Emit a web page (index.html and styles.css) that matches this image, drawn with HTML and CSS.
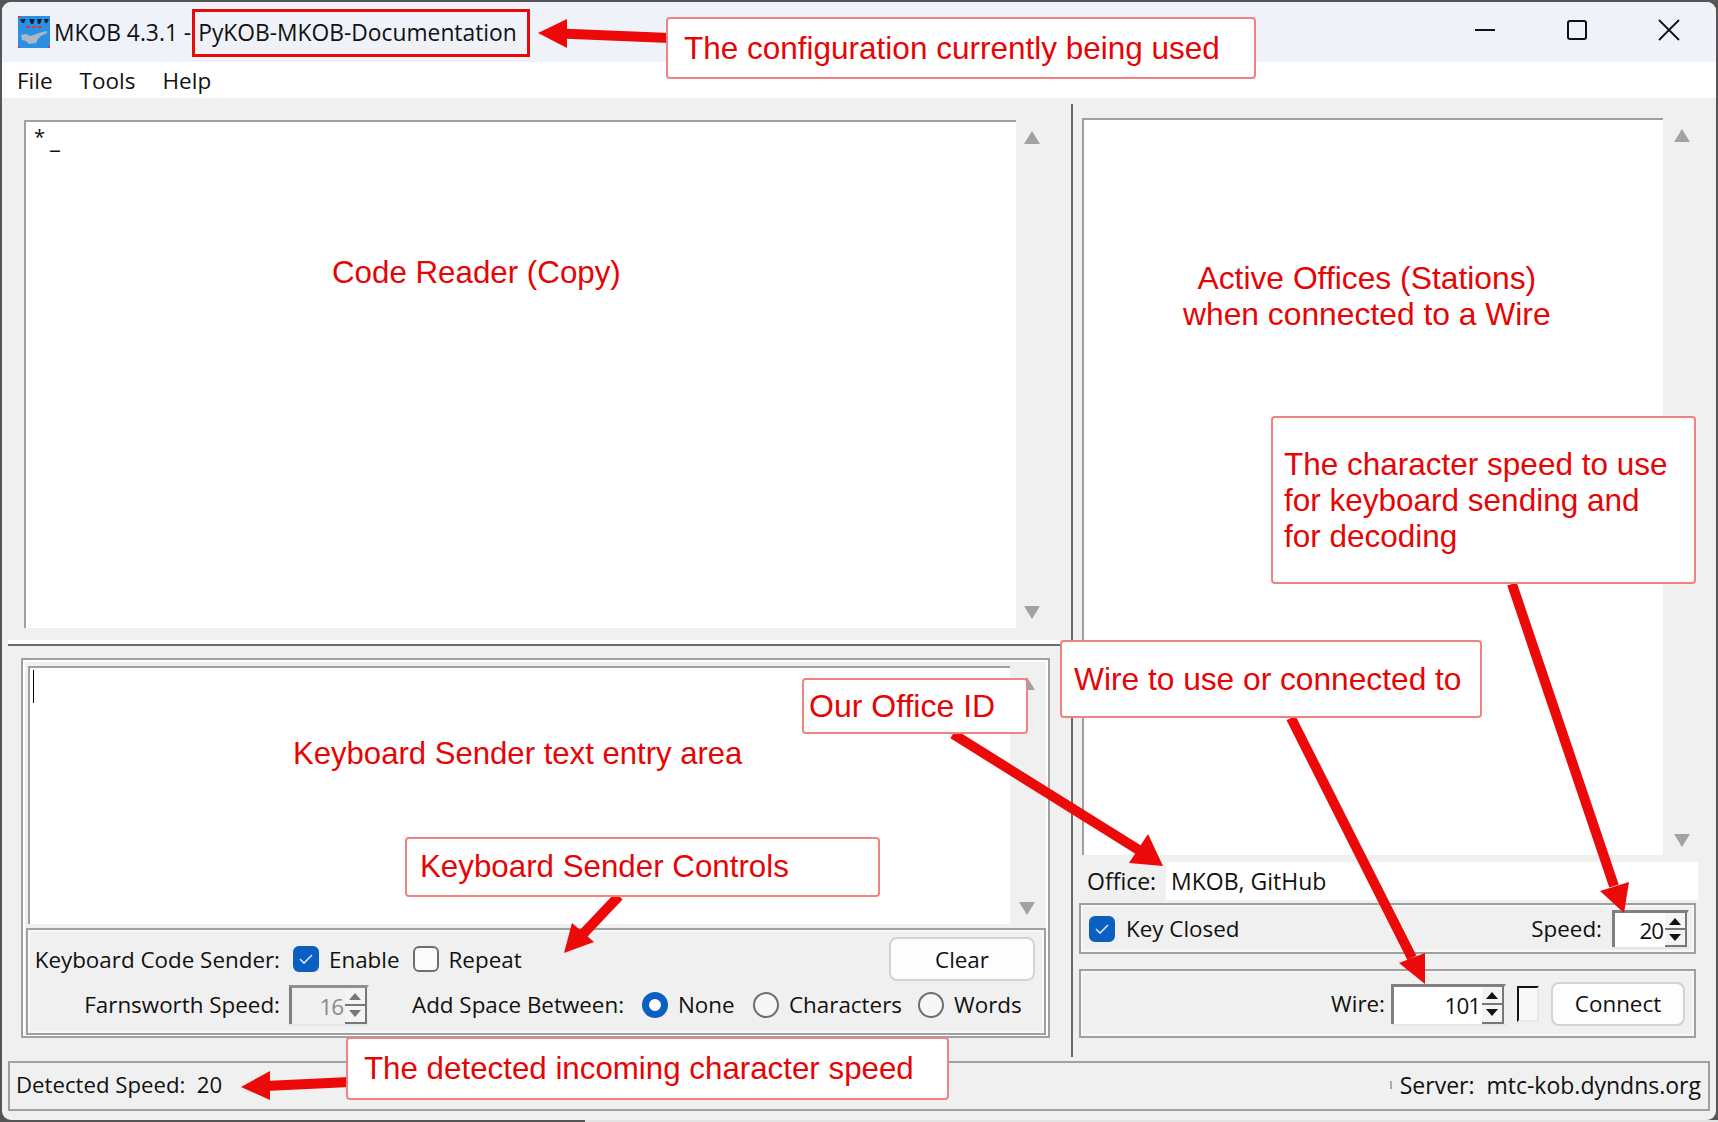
FILE: index.html
```html
<!DOCTYPE html>
<html><head>
<title>MKOB 4.3.1 - PyKOB-MKOB-Documentation</title>
<link rel="stylesheet" href="styles.css">
</head><body>
<div class="window">
  <div class="titlebar">
    <svg class="app-icon" width="32" height="32" viewBox="0 0 32 32">
      <rect width="32" height="32" fill="#2a90e4"/>
      <path d="M2 3h6l-2 4h-2zM11 3h6l-2 5h-2zM19 3h5l-2 5h-2zM26 3h5l-2 4h-2z" fill="#10233c"/>
      <path d="M8 10h4v2h-4zM14 10h4v2h-4zM20 10h4v2h-4z" fill="#e2353a"/>
      <path d="M3 19l5-1 4 2 6-2 6-2 5-1v2l-6 3-3 3-2 4-7 1-3-3-4-1z" fill="#a9b8c4"/>
      <path d="M0 0h2v2h-2zM0 30h2v2h-2zM30 30h2v2h-2z" fill="#e2353a"/>
    </svg>
    <span class="app-name">MKOB 4.3.1 -</span>
    <span class="config-name">PyKOB-MKOB-Documentation</span>
    <div class="caption-btns">
      <svg width="22" height="22" viewBox="0 0 22 22"><path d="M1 11h20" stroke="#111" stroke-width="2"/></svg>
      <svg width="22" height="22" viewBox="0 0 22 22"><rect x="2" y="2" width="18" height="18" rx="2" fill="none" stroke="#111" stroke-width="2"/></svg>
      <svg width="22" height="22" viewBox="0 0 22 22"><path d="M1 1l20 20M21 1l-20 20" stroke="#111" stroke-width="1.8"/></svg>
    </div>
  </div>
  <div class="menubar"><span>File</span><span>Tools</span><span>Help</span></div>

  <div class="main">
    <div class="left-pane">
      <div class="reader">
        <div class="textbox reader-text"><span class="star">*</span><span class="prompt">_</span></div>
        <div class="scroll"><i class="up"></i><i class="down"></i></div>
      </div>
      <div class="hsep"></div>
      <div class="sender-frame">
        <div class="sender-top">
          <div class="textbox sender-text"><span class="caret"></span></div>
          <div class="scroll"><i class="up"></i><i class="down"></i></div>
        </div>
        <div class="frame controls">
          <div class="ctl-row first">
            <label class="ctl-label">Keyboard Code Sender:</label>
            <span class="check on"><svg width="16" height="12" viewBox="0 0 16 12"><path d="M2 6l4 4 8-8" fill="none" stroke="#cfe3fa" stroke-width="1.6"/></svg></span>
            <span class="opt">Enable</span>
            <span class="check"></span>
            <span class="opt">Repeat</span>
            <button class="btn clear-btn">Clear</button>
          </div>
          <div class="ctl-row">
            <label class="ctl-label">Farnsworth Speed:</label>
            <div class="spin spin-off"><span class="val">16</span><span class="spin-btns"><i class="up"></i><i class="down"></i></span></div>
            <label class="space-label">Add Space Between:</label>
            <span class="radio on"></span><span class="opt r1">None</span>
            <span class="radio"></span><span class="opt r2">Characters</span>
            <span class="radio"></span><span class="opt">Words</span>
          </div>
        </div>
      </div>
    </div>

    <div class="vsep"></div>

    <div class="right-pane">
      <div class="stations">
        <div class="textbox stations-text"></div>
        <div class="scroll"><i class="up"></i><i class="down"></i></div>
      </div>
      <div class="office-row">
        <span class="office-label">Office:</span>
        <div class="office-entry">MKOB, GitHub</div>
      </div>
      <div class="frame key-frame">
        <span class="check on"><svg width="16" height="12" viewBox="0 0 16 12"><path d="M2 6l4 4 8-8" fill="none" stroke="#cfe3fa" stroke-width="1.6"/></svg></span>
        <span class="opt key-closed">Key Closed</span>
        <span class="speed-label">Speed:</span>
        <div class="spin speed-spin"><span class="val">20</span><span class="spin-btns"><i class="up"></i><i class="down"></i></span></div>
      </div>
      <div class="frame wire-frame">
        <span class="wire-label">Wire:</span>
        <div class="spin wire-spin"><span class="val">101</span><span class="spin-btns"><i class="up"></i><i class="down"></i></span></div>
        <div class="indicator"></div>
        <button class="btn connect-btn">Connect</button>
      </div>
    </div>
  </div>

  <div class="statusbar">
    <span>Detected Speed:&nbsp; 20</span>
    <span class="server"><i class="tick"></i>Server:&nbsp; mtc-kob.dyndns.org</span>
  </div>

  <!-- callouts pasted on top of the screenshot -->
  <div class="config-mark"></div>
  <svg class="arrows" width="1716" height="1120" viewBox="2 2 1716 1120">
    <g stroke="#ec0909" stroke-width="10" fill="none">
      <path d="M670 38L560 33.500"/>
      <path d="M350 1082L265 1086"/>
      <path d="M619 896L583 934"/>
      <path d="M953 734L1142 852"/>
      <path d="M1291 718L1412 958"/>
      <path d="M1512 584L1614 886"/>
    </g>
    <g fill="#ec0909">
      <path d="M538 33L567 19V48Z"/>
      <path d="M241 1087L270 1071V1100Z"/>
      <path d="M564 953L594 942L572 923Z"/>
      <path d="M1163 866L1129 863L1148 834Z"/>
      <path d="M1425 984L1399 963L1425 953Z"/>
      <path d="M1624 913L1600 891L1629 882Z"/>
    </g>
  </svg>
  <div class="note n-config">The configuration currently being used</div>
  <div class="note n-speed">The character speed to use<br>for keyboard sending and<br>for decoding</div>
  <div class="note n-wire">Wire to use or connected to</div>
  <div class="note n-office">Our Office ID</div>
  <div class="note n-controls">Keyboard Sender Controls</div>
  <div class="note n-detected">The detected incoming character speed</div>
  <div class="label l-reader">Code Reader (Copy)</div>
  <div class="label l-stations">Active Offices (Stations)<br>when connected to a Wire</div>
  <div class="label l-sender">Keyboard Sender text entry area</div>
</div>
</body></html>
```

FILE: styles.css
```css
html, body { margin: 0; height: 100%; }
body { background: linear-gradient(90deg, #555 585px, #e4e4e4 585px) bottom / 100% 2px no-repeat, #555; overflow: hidden; font-family: "Open Sans", "Noto Sans", sans-serif; font-size: 22.4px; color: #111; white-space: nowrap; }
i { display: block; }

.window { position: relative; box-sizing: border-box; width: 1714px; height: 1118px; margin: 2px 0 0 2px; background: #f0f0f0; border-radius: 9px; overflow: hidden; display: flex; flex-direction: column; }

.titlebar { height: 60px; background: #eff3f9; display: flex; align-items: center; padding-left: 16px; font-size: 22.8px; flex: none; }
.app-icon { margin-right: 4px; flex: none; }
.app-name { margin-right: 7px; }
.caption-btns { margin-left: auto; display: flex; gap: 70px; padding-right: 36px; margin-top: -5px; }

.menubar { height: 36px; padding-top: 1px; box-sizing: border-box; background: #fff; display: flex; gap: 27px; align-items: center; padding-left: 15px; flex: none; font-size: 22.5px; }

.main { flex: 1; display: grid; grid-template-columns: 1069px 3px 1fr; min-height: 0; }

.textbox { background: #fff; border-top: 2px solid #a0a0a0; border-left: 2px solid #a0a0a0; box-sizing: border-box; position: relative; }
.scroll { position: relative; background: #f0f0f0; }
.scroll i { position: absolute; left: 8px; width: 0; height: 0; border-left: 8px solid transparent; border-right: 8px solid transparent; }
.scroll .up { top: 11px; border-bottom: 13px solid #a2a2a2; }
.scroll .down { bottom: 9px; border-top: 13px solid #a2a2a2; }

.left-pane { padding-top: 22px; display: flex; flex-direction: column; }
.reader { margin-left: 22px; height: 508px; display: flex; }
.reader-text { width: 992px; }
.reader .scroll { width: 32px; }
.star { position: absolute; left: 8px; top: 2px; font-size: 20px; line-height: 26px; }
.prompt { position: absolute; left: 24px; top: 2px; font-size: 24px; line-height: 30px; font-weight: 700; }

.hsep { height: 2px; margin: 12px 9px 0 6px; background: #fff; border-bottom: 2px solid #6a6a6a; padding-bottom: 2px; }

.sender-frame { margin: 12px 21px 0 19px; height: 380px; box-sizing: border-box; border: 2px solid #a0a0a0; box-shadow: inset 0 0 0 2px #fff; padding: 6px 2px 1px 5px; display: flex; flex-direction: column; }
.sender-top { display: flex; height: 258px; flex: none; }
.sender-text { width: 982px; }
.sender-top .scroll { flex: 1; }
.sender-top .scroll i { left: 9px; }
.caret { position: absolute; left: 3px; top: 2px; width: 1px; height: 33px; background: #000; }

.frame { box-sizing: border-box; border: 2px solid #a0a0a0; box-shadow: inset 0 0 0 2px #f7f7f7; }
.controls { margin: 4px 0 0 -2px; flex: 1; padding: 6px 9px 0 0; }
.ctl-row { display: flex; align-items: center; height: 45px; }
.ctl-row.first { height: 46px; }
.ctl-label { width: 252px; text-align: right; flex: none; }
.opt { margin-left: 10px; flex: none; }
.check { box-sizing: border-box; width: 26px; height: 26px; border: 2px solid #6e6e6e; border-radius: 6px; margin-left: 13px; background: #fbfbfb; flex: none; display: flex; align-items: center; justify-content: center; }
.check.on { background: #0a5fc0; border-color: #0a5fc0; }
.check + .opt + .check { margin-left: 13px; }
.radio { box-sizing: border-box; width: 26px; height: 26px; border: 2px solid #6e6e6e; border-radius: 50%; background: #f7f7f7; flex: none; margin-left: 18px; }
.radio.on { border: 7px solid #0a5fc0; background: #fff; margin-left: 16px; }
.space-label { margin-left: 43px; width: 214px; flex: none; }
.r1 { width: 57px; }
.r2 { width: 111px; }

.btn { font: inherit; color: #111; background: #fdfdfd; border: 2px solid #d3d3d3; border-radius: 8px; padding: 0; }
.clear-btn { width: 146px; height: 44px; margin-left: auto; flex: none; }

.spin { box-sizing: border-box; display: flex; align-items: center; justify-content: flex-end; border-top: 3px solid #808080; border-left: 3px solid #808080; border-right: 2px solid #eee; background: #fff; box-shadow: 0 2px 0 #e6e6e6; flex: none; }
.val { margin-right: 2px; letter-spacing: -1px; }
.spin-btns { display: flex; flex-direction: column; width: 22px; height: 100%; box-sizing: border-box; }
.spin-btns i { flex: 1; position: relative; background: #f4f4f4; border-right: 2px solid #777; }
.spin-btns .down { border-top: 2px solid #777; border-bottom: 2px solid #777; }
.spin-btns i::after { content: ""; position: absolute; left: 4px; width: 0; height: 0; border-left: 6px solid transparent; border-right: 6px solid transparent; }
.spin-btns .up::after { top: 5px; border-bottom: 7px solid #111; }
.spin-btns .down::after { top: 4px; border-top: 7px solid #111; }
.spin-off { width: 80px; height: 39px; margin-left: 9px; background: #f0f0f0; color: #8a8a8a; border-top-color: #909090; }
.spin-off i::after { opacity: .55; }

.vsep { background: #6a6a6a; width: 2px; margin: 6px 0 4px; }

.right-pane { padding: 20px 20px 0 8px; display: flex; flex-direction: column; }
.stations { height: 737px; display: flex; flex: none; margin-right: -2px; }
.stations-text { width: 581px; }
.stations .scroll { flex: 1; }
.stations .scroll i { left: 11px; }
.stations .scroll .down { bottom: 8px; }
.office-row { display: flex; align-items: center; height: 40px; margin: 6px -2px 0 4px; flex: none; font-size: 23px; }
.office-label { width: 79px; margin-left: 1px; flex: none; }
.office-entry { flex: 1; background: #fff; height: 38px; line-height: 38px; padding-left: 5px; }
.key-frame { margin: 2px 0 0 -3px; height: 51px; display: flex; align-items: center; padding-right: 5px; flex: none; }
.key-frame .check { margin-left: 8px; }
.key-frame .opt { margin-left: 11px; }
.speed-label { margin-left: auto; margin-right: 10px; }
.speed-spin { width: 77px; height: 37px; }
.wire-frame { margin: 15px 0 0 -3px; height: 69px; display: flex; align-items: center; padding-right: 9px; justify-content: flex-end; flex: none; }
.wire-label { margin-right: 6px; }
.wire-spin { width: 115px; height: 40px; }
.indicator { box-sizing: border-box; width: 22px; height: 36px; margin: 0 12px 0 11px; border-top: 2px solid #111; border-left: 2px solid #111; border-right: 2px solid #e8e8e8; border-bottom: 2px solid #e8e8e8; background: #f8f8f8; }
.connect-btn { width: 134px; height: 44px; }

.statusbar { box-sizing: border-box; height: 50px; flex: none; margin: 0 6px 9px; border: 2px solid #a0a0a0; display: flex; align-items: center; justify-content: space-between; padding: 0 7px 3px 6px; font-size: 22.2px; }
.server { position: relative; font-size: 23px; }
.tick { position: absolute; left: -10px; top: 12px; width: 2px; height: 8px; background: #aaa; }

.config-mark { position: absolute; left: 190px; top: 7px; width: 338px; height: 48px; box-sizing: border-box; border: 3px solid #e60a0a; }
.arrows { position: absolute; left: 0; top: 0; pointer-events: none; }

.note { position: absolute; box-sizing: border-box; background: #fff; border: 2px solid #f08282; border-radius: 4px; color: #e60505; font-family: "Liberation Sans", Arial, sans-serif; font-size: 31.5px; display: flex; align-items: center; }
.label { position: absolute; color: #e60505; font-family: "Liberation Sans", Arial, sans-serif; font-size: 31.5px; text-align: center; line-height: 36px; }

.n-config { left: 664px; top: 15px; width: 590px; height: 62px; padding-left: 16px; }
.n-speed { left: 1269px; top: 414px; width: 425px; height: 168px; padding-left: 11px; line-height: 36px; }
.n-wire { left: 1058px; top: 638px; width: 422px; height: 78px; padding-left: 12px; font-size: 31.7px; }
.n-office { left: 800px; top: 676px; width: 226px; height: 56px; padding-left: 5px; font-size: 32px; }
.n-controls { left: 403px; top: 835px; width: 475px; height: 60px; padding-left: 13px; font-size: 31.3px; }
.n-detected { left: 344px; top: 1035px; width: 603px; height: 63px; padding-left: 16px; font-size: 31.3px; }
.l-reader { left: 330px; top: 253px; font-size: 31.3px; }
.l-stations { left: 1181px; top: 258px; font-size: 31.8px; }
.l-sender { left: 291px; top: 734px; font-size: 31.1px; }
```
